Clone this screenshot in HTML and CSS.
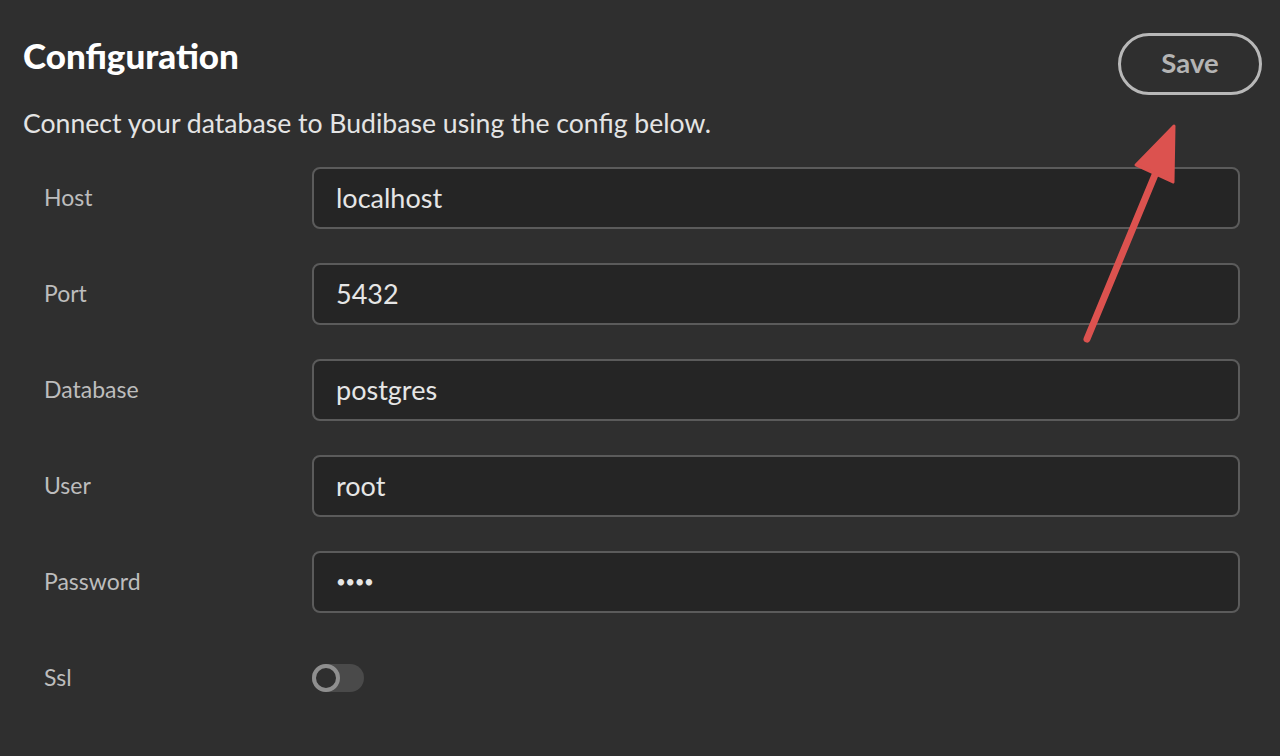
FILE: index.html
```html
<!DOCTYPE html>
<html>
<head>
<meta charset="utf-8">
<link rel="stylesheet" href="styles.css">
</head>
<body>
<div class="page">
  <div class="header">
    <div class="intro">
      <h1 class="title">Configuration</h1>
      <p class="desc">Connect your database to Budibase using the config below.</p>
    </div>
    <button class="save">Save</button>
  </div>
  <div class="form">
    <div class="label">Host</div>
    <div class="input">localhost</div>
    <div class="label">Port</div>
    <div class="input">5432</div>
    <div class="label">Database</div>
    <div class="input">postgres</div>
    <div class="label">User</div>
    <div class="input">root</div>
    <div class="label">Password</div>
    <div class="input pw">••••</div>
    <div class="label">Ssl</div>
    <div class="toggle-cell"><div class="toggle"><div class="knob"></div></div></div>
  </div>
</div>
<svg class="arrow" width="1280" height="756" viewBox="0 0 1280 756">
  <line x1="1087" y1="339" x2="1157" y2="170" stroke="#dc524f" stroke-width="7" stroke-linecap="round"/>
  <polygon points="1174,126 1136,165 1173,182" fill="#dc524f" stroke="#dc524f" stroke-width="3" stroke-linejoin="round"/>
</svg>
</body>
</html>
```
FILE: styles.css
```css
html, body {
  margin: 0;
  padding: 0;
  background: #2f2f2f;
  width: 1280px;
  height: 756px;
  overflow: hidden;
  font-family: "Lato", "Liberation Sans", sans-serif;
}
.page {
  padding: 0 18px 0 23px;
}
.header {
  display: flex;
  justify-content: space-between;
  align-items: flex-start;
}
.title {
  margin: 35px 0 0;
  font-size: 35px;
  line-height: 40px;
  font-weight: 900;
  color: #ffffff;
}
.desc {
  margin: 32px 0 0;
  font-size: 26.6px;
  line-height: 32px;
  color: #e4e4e4;
}
.save {
  margin-top: 33px;
  width: 144px;
  height: 62px;
  border: 3px solid #b8b8b8;
  border-radius: 31px;
  background: transparent;
  color: #b4b4b4;
  font-family: "Lato", "Liberation Sans", sans-serif;
  font-size: 27.5px;
  font-weight: 700;
  padding: 0 0 4px;
}
.form {
  margin-top: 28px;
  padding: 0 22px 0 21px;
  display: grid;
  grid-template-columns: 268px 1fr;
  grid-auto-rows: 62px;
  row-gap: 34px;
}
.label {
  display: flex;
  align-items: center;
  font-size: 23px;
  color: #bdbdbd;
  padding-bottom: 2px;
}
.input {
  box-sizing: border-box;
  display: flex;
  align-items: center;
  border: 2px solid #5b5b5b;
  border-radius: 8px;
  background: #252525;
  padding-left: 22px;
  padding-bottom: 2px;
  font-size: 27px;
  color: #e6e6e6;
}
.pw {
  font-size: 17px;
  letter-spacing: -0.5px;
}
.toggle-cell {
  display: flex;
  align-items: center;
}
.toggle {
  width: 52px;
  height: 28px;
  border-radius: 14px;
  background: #4a4a4a;
  display: flex;
  align-items: center;
}
.knob {
  box-sizing: border-box;
  width: 28px;
  height: 28px;
  border-radius: 50%;
  border: 4px solid #8f8f8f;
  background: #2f2f2f;
}
.arrow {
  position: absolute;
  left: 0;
  top: 0;
  pointer-events: none;
}
```
